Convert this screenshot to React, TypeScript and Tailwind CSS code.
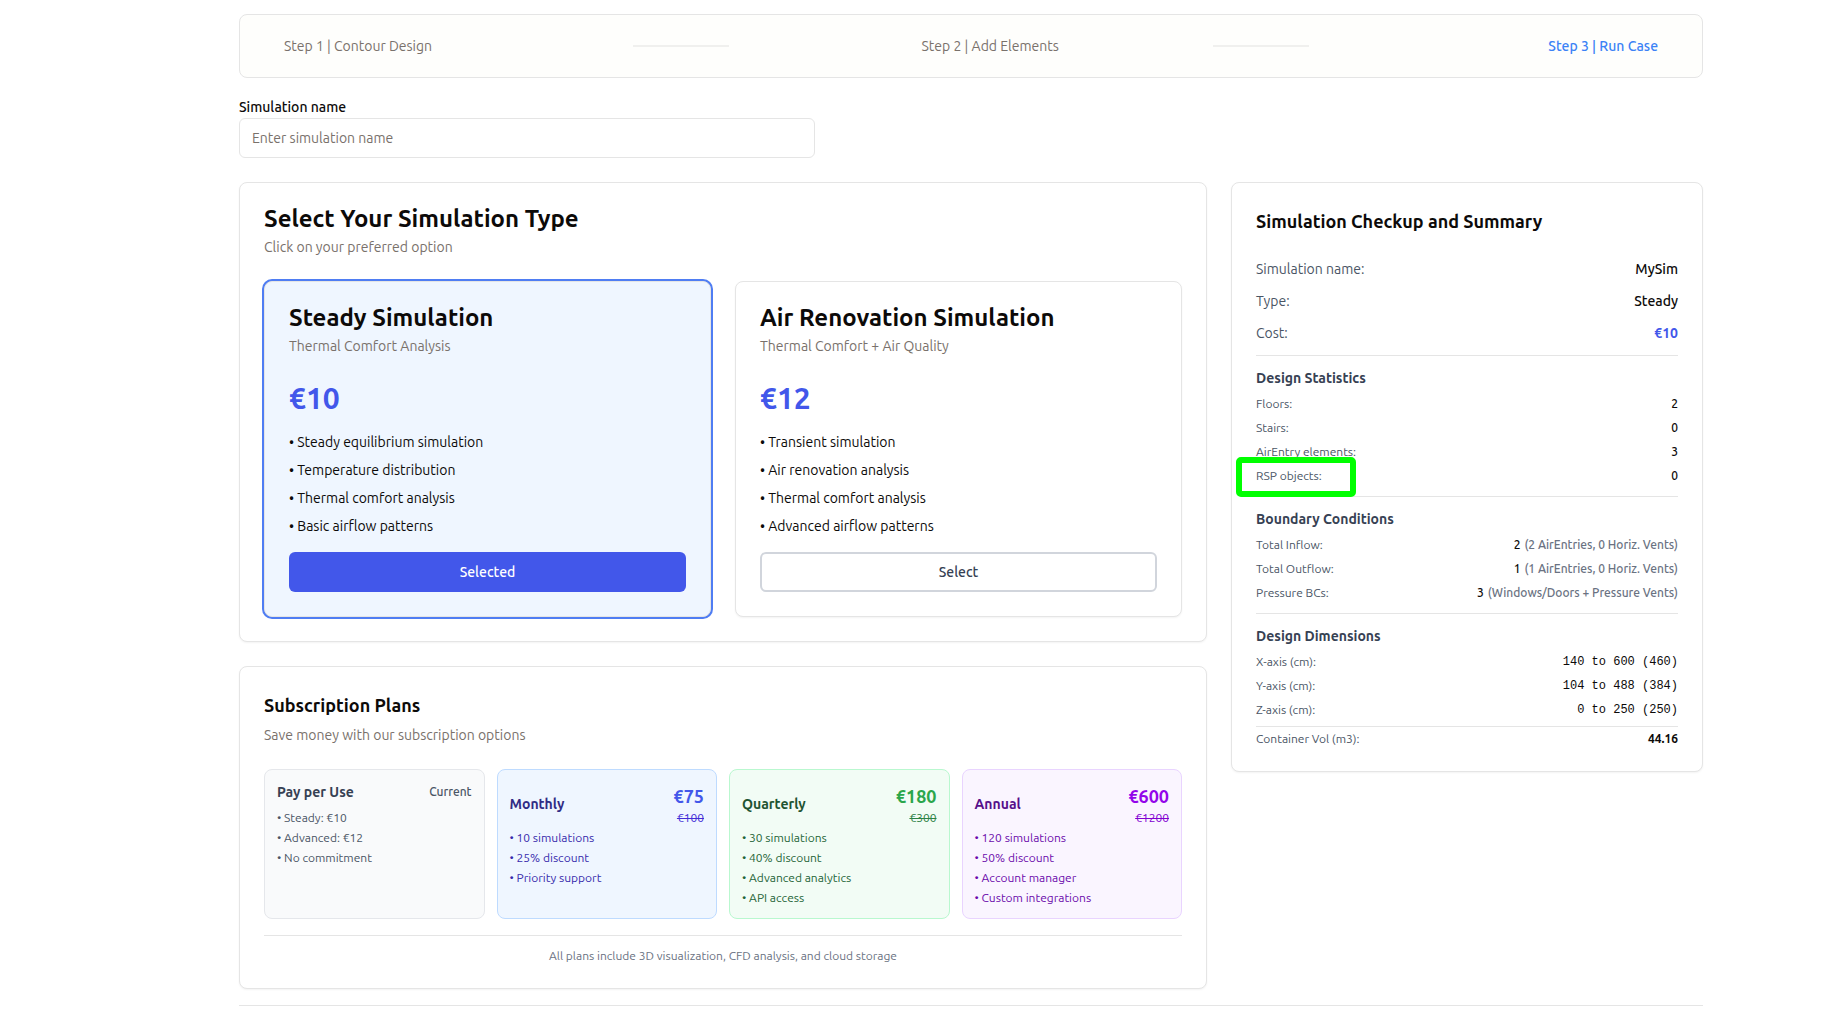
import { useState } from "react";
import type { ReactNode } from "react";

const simulationTypes = [
  {
    id: "steady",
    title: "Steady Simulation",
    subtitle: "Thermal Comfort Analysis",
    price: "€10",
    features: [
      "Steady equilibrium simulation",
      "Temperature distribution",
      "Thermal comfort analysis",
      "Basic airflow patterns",
    ],
  },
  {
    id: "renovation",
    title: "Air Renovation Simulation",
    subtitle: "Thermal Comfort + Air Quality",
    price: "€12",
    features: [
      "Transient simulation",
      "Air renovation analysis",
      "Thermal comfort analysis",
      "Advanced airflow patterns",
    ],
  },
];

const plans = [
  {
    name: "Monthly",
    price: "€75",
    oldPrice: "€100",
    features: ["10 simulations", "25% discount", "Priority support"],
    card: "border-blue-200 bg-blue-50",
    title: "text-indigo-900",
    amount: "text-[#4257ea]",
    old: "text-indigo-700",
    list: "text-indigo-800",
  },
  {
    name: "Quarterly",
    price: "€180",
    oldPrice: "€300",
    features: ["30 simulations", "40% discount", "Advanced analytics", "API access"],
    card: "border-green-200 bg-[#f2fcf5]",
    title: "text-[#1f5432]",
    amount: "text-[#2ba64b]",
    old: "text-[#2c8245]",
    list: "text-[#256538]",
  },
  {
    name: "Annual",
    price: "€600",
    oldPrice: "€1200",
    features: ["120 simulations", "50% discount", "Account manager", "Custom integrations"],
    card: "border-purple-200 bg-purple-50",
    title: "text-[#560f8a]",
    amount: "text-[#9305ea]",
    old: "text-[#8200d1]",
    list: "text-[#6b0aab]",
  },
];

const boundaryConditions = [
  { label: "Total Inflow:", value: "2", note: "(2 AirEntries, 0 Horiz. Vents)" },
  { label: "Total Outflow:", value: "1", note: "(1 AirEntries, 0 Horiz. Vents)" },
  { label: "Pressure BCs:", value: "3", note: "(Windows/Doors + Pressure Vents)" },
];

const dimensions = [
  { label: "X-axis (cm):", value: "140 to 600 (460)" },
  { label: "Y-axis (cm):", value: "104 to 488 (384)" },
  { label: "Z-axis (cm):", value: "0 to 250 (250)" },
];

function Row({ label, children }: { label: string; children: ReactNode }) {
  return (
    <div className="flex items-center justify-between text-xs">
      <dt className="text-gray-600">{label}</dt>
      <dd className="font-medium">{children}</dd>
    </div>
  );
}

function Section({ title, children }: { title: string; children: ReactNode }) {
  return (
    <section className="mt-3 border-t border-neutral-200 pt-3">
      <h3 className="text-sm font-bold text-gray-700">{title}</h3>
      <dl className="mt-2 flex flex-col gap-2">{children}</dl>
    </section>
  );
}

function Stepper() {
  return (
    <nav aria-label="Progress" className="rounded-lg border border-neutral-200 bg-[#fefefc] px-8 py-5">
      <ol className="flex items-center text-sm leading-[22px] text-stone-500">
        <li className="px-3">Step 1 | Contour Design</li>
        <li aria-hidden="true" className="flex flex-1 justify-center">
          <span className="ml-2 h-0.5 w-24 bg-[#f0f0ee]" />
        </li>
        <li className="px-3">Step 2 | Add Elements</li>
        <li aria-hidden="true" className="flex flex-1 justify-center">
          <span className="mr-[86px] h-0.5 w-24 bg-[#f0f0ee]" />
        </li>
        <li aria-current="step" className="px-3 font-medium text-[#3b82f6]">
          Step 3 | Run Case
        </li>
      </ol>
    </nav>
  );
}

function Summary({ name, type, cost }: { name: string; type: string; cost: string }) {
  return (
    <aside className="rounded-lg border border-neutral-200 bg-white p-6 shadow-xs">
      <h2 className="text-lg leading-7 font-bold">Simulation Checkup and Summary</h2>
      <dl className="mt-6 flex flex-col gap-3 text-sm">
        <div className="flex justify-between">
          <dt className="text-gray-600">Simulation name:</dt>
          <dd className="font-medium">{name}</dd>
        </div>
        <div className="flex justify-between">
          <dt className="text-gray-600">Type:</dt>
          <dd className="font-medium">{type}</dd>
        </div>
        <div className="flex justify-between">
          <dt className="text-gray-600">Cost:</dt>
          <dd className="font-bold text-[#4257ea]">{cost}</dd>
        </div>
      </dl>

      <Section title="Design Statistics">
        <Row label="Floors:">2</Row>
        <Row label="Stairs:">0</Row>
        <Row label="AirEntry elements:">3</Row>
        <div className="relative">
          <Row label="RSP objects:">0</Row>
          <div className="pointer-events-none absolute -top-[11px] -left-5 h-10 w-[120px] rounded-[5px] border-6 border-[#00ff00]" />
        </div>
      </Section>

      <Section title="Boundary Conditions">
        {boundaryConditions.map((b) => (
          <Row key={b.label} label={b.label}>
            {b.value} <span className="ml-px text-gray-500">{b.note}</span>
          </Row>
        ))}
      </Section>

      <Section title="Design Dimensions">
        {dimensions.map((d) => (
          <Row key={d.label} label={d.label}>
            <span className="block font-['Liberation_Mono',monospace] leading-4 font-normal">{d.value}</span>
          </Row>
        ))}
        <div className="border-t border-neutral-200 pt-1">
          <Row label="Container Vol (m3):">
            <span className="font-bold">44.16</span>
          </Row>
        </div>
      </Section>
    </aside>
  );
}

export default function App() {
  const [selected, setSelected] = useState("steady");
  const current = simulationTypes.find((t) => t.id === selected) ?? simulationTypes[0];

  return (
    <div className="min-h-screen bg-white pt-3.5 pr-[143px] pl-[239px] font-[Ubuntu,'Noto_Sans',sans-serif] text-stone-950">
      <Stepper />

      <div className="mt-[18px] max-w-xl">
        <label htmlFor="simulation-name" className="block text-sm leading-[22px] font-medium">
          Simulation name
        </label>
        <input
          id="simulation-name"
          type="text"
          placeholder="Enter simulation name"
          className="block h-10 w-full rounded-md border border-neutral-200 bg-white px-3 text-sm placeholder:text-stone-500"
        />
      </div>

      <main className="mt-6 grid grid-cols-3 items-start gap-6 border-b border-neutral-200 pb-4">
        <div className="col-span-2 flex flex-col gap-6">
          <section className="rounded-lg border border-neutral-200 bg-white p-6 shadow-xs">
            <h1 className="text-2xl leading-6 font-bold">Select Your Simulation Type</h1>
            <p className="mt-1.5 text-sm text-stone-500">Click on your preferred option</p>

            <div className="mt-6 grid grid-cols-2 gap-6">
              {simulationTypes.map((t) => {
                const active = t.id === selected;
                return (
                  <article
                    key={t.id}
                    className={
                      active
                        ? "rounded-lg border border-neutral-200 bg-blue-50 p-6 ring-2 ring-[#4f7df3]"
                        : "rounded-lg border border-neutral-200 bg-white p-6 shadow-xs"
                    }
                  >
                    <h2 className="text-2xl leading-6 font-bold">{t.title}</h2>
                    <p className="mt-1.5 text-sm text-stone-500">{t.subtitle}</p>
                    <p className="mt-6 text-3xl leading-9 font-bold text-[#4257ea]">{t.price}</p>
                    <ul className="mt-4 flex flex-col gap-2 text-sm">
                      {t.features.map((f) => (
                        <li key={f}>• {f}</li>
                      ))}
                    </ul>
                    <button
                      type="button"
                      aria-pressed={active}
                      onClick={() => setSelected(t.id)}
                      className={
                        active
                          ? "mt-4 h-10 w-full rounded-md bg-[#4257ea] text-sm font-medium text-white"
                          : "mt-4 h-10 w-full rounded-md border-2 border-gray-300 bg-white text-sm font-medium text-gray-700"
                      }
                    >
                      {active ? "Selected" : "Select"}
                    </button>
                  </article>
                );
              })}
            </div>
          </section>

          <section className="rounded-lg border border-neutral-200 bg-white p-6 shadow-xs">
            <h2 className="text-lg leading-7 font-bold">Subscription Plans</h2>
            <p className="mt-1.5 text-sm text-stone-500">Save money with our subscription options</p>

            <div className="mt-6 grid grid-cols-4 gap-3">
              <article className="rounded-lg border border-gray-200 bg-gray-50 p-3">
                <div className="flex items-center justify-between">
                  <h3 className="text-sm font-bold text-gray-700">Pay per Use</h3>
                  <span className="text-xs font-medium text-gray-600">Current</span>
                </div>
                <ul className="mt-2 flex flex-col gap-1 text-xs text-gray-600">
                  <li>• Steady: €10</li>
                  <li>• Advanced: €12</li>
                  <li>• No commitment</li>
                </ul>
              </article>
              {plans.map((p) => (
                <article key={p.name} className={`rounded-lg border p-3 ${p.card}`}>
                  <div className="flex items-center justify-between">
                    <h3 className={`text-sm font-bold ${p.title}`}>{p.name}</h3>
                    <div className="text-right">
                      <div className={`text-lg leading-7 font-bold ${p.amount}`}>{p.price}</div>
                      <s className={`block text-xs ${p.old}`}>{p.oldPrice}</s>
                    </div>
                  </div>
                  <ul className={`mt-1 flex flex-col gap-1 text-xs ${p.list}`}>
                    {p.features.map((f) => (
                      <li key={f}>• {f}</li>
                    ))}
                  </ul>
                </article>
              ))}
            </div>

            <p className="mt-4 border-t border-neutral-200 pt-3 text-center text-xs text-gray-500">
              All plans include 3D visualization, CFD analysis, and cloud storage
            </p>
          </section>
        </div>

        <Summary
          name="MySim"
          type={current.id === "steady" ? "Steady" : "Air Renovation"}
          cost={current.price}
        />
      </main>
    </div>
  );
}
